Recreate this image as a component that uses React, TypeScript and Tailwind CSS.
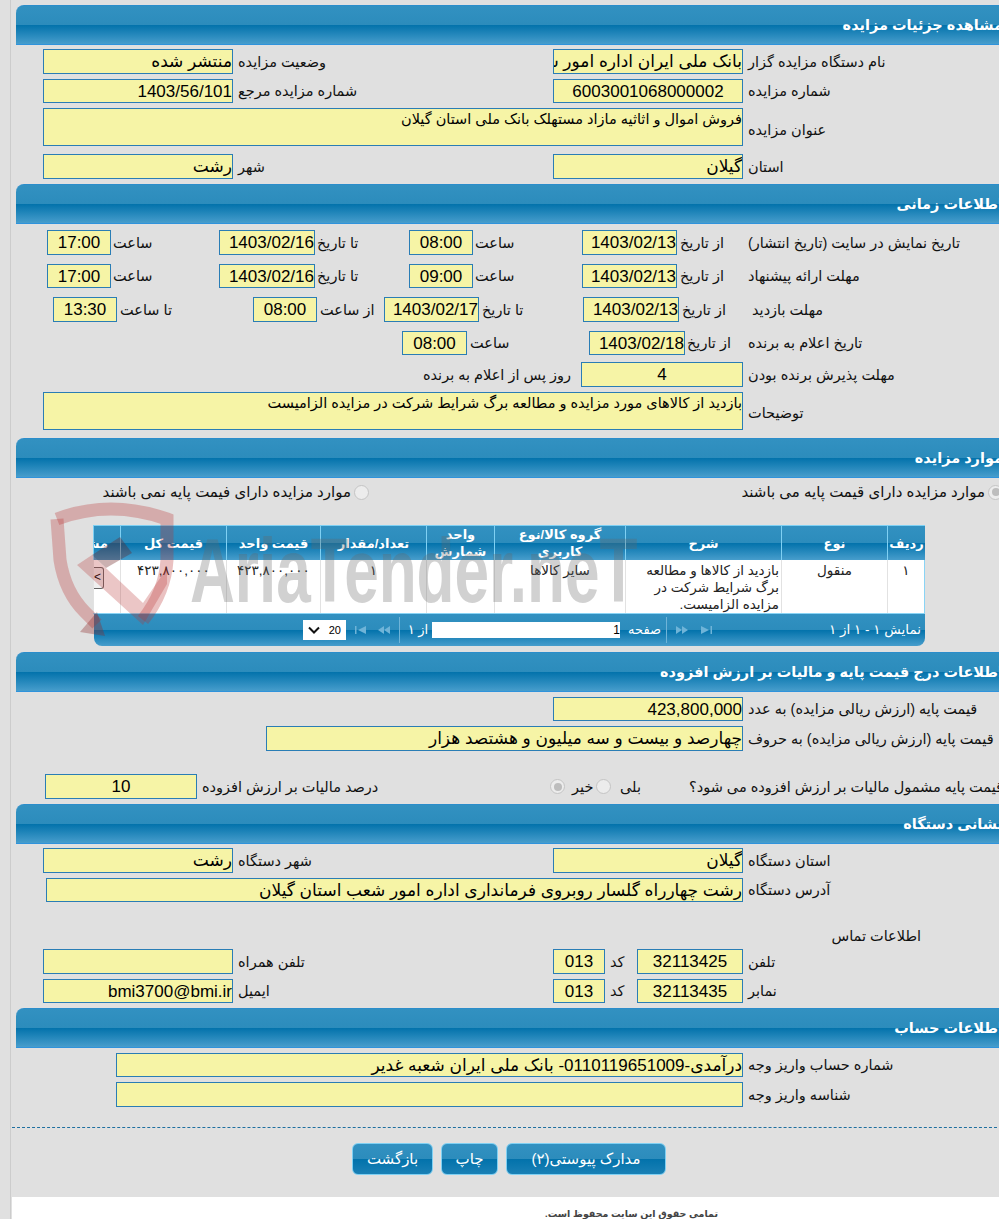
import React from 'react';

const gradient = 'bg-[linear-gradient(#3291c1_0%,#2c8cbc_49%,#0272ab_50%,#479dcc_100%)]';

// yellow read-only field used everywhere in the form
const Box = ({ w, h = 'h-[25px]', center, area, children }: { w: string; h?: string; center?: boolean; area?: boolean; children?: React.ReactNode }) => (
  <div
    dir="rtl"
    className={`${w} ${h} shrink-0 overflow-hidden whitespace-nowrap border border-[#2a7db5] bg-[#f6f4a6] text-black ${
      center ? 'text-center' : 'text-right'
    } ${area ? 'pt-[1px] text-[14.5px] leading-[18px]' : 'text-[17px] leading-[24px]'}`}
  >
    {children}
  </div>
);

const Label = ({ w, cls = 'pl-[2px]', children }: { w?: string; cls?: string; children?: React.ReactNode }) => (
  <div dir="rtl" className={`${w ?? ''} ${cls} shrink-0 whitespace-nowrap text-left text-[14.5px] leading-[18px] text-[#111]`}>
    {children}
  </div>
);

const Row = ({ cls, children }: { cls: string; children: React.ReactNode }) => (
  <div className={`flex items-center ${cls}`}>{children}</div>
);

const SectionHeader = ({ title, cls = '' }: { title: string; cls?: string }) => (
  <div
    dir="rtl"
    className={`${gradient} ${cls} h-[40px] w-[994px] shrink-0 rounded-tl-[8px] border-y border-t-[#2b8dcb] border-b-[#2f93dc] pr-[7px] pt-[9px] text-[14.5px] font-bold leading-[20px] text-white`}
  >
    {title}
  </div>
);

const Radio = ({ checked, cls = '' }: { checked?: boolean; cls?: string }) => (
  <span className={`${cls} flex h-[15px] w-[15px] shrink-0 items-center justify-center rounded-full border border-[#c4c4c4] bg-[#ececec]`}>
    {checked && <span className="h-[8px] w-[8px] rounded-full bg-[#bdbdbd]" />}
  </span>
);

const PagerIcon = ({ d, cls }: { d: string; cls: string }) => (
  <svg viewBox="0 0 14 10" className={`${cls} h-[10px] w-[14px] shrink-0`}>
    <path d={d} fill="#6fb4d8" />
  </svg>
);

const HeadCell = ({ cls = 'justify-center', children }: { cls?: string; children?: React.ReactNode }) => (
  <div dir="rtl" className={`${cls} flex items-center overflow-hidden border-l border-[#7fd0f3] text-center text-[13px] font-bold leading-[17px] text-white`}>
    {children}
  </div>
);

const BodyCell = ({ cls = 'text-center', children }: { cls?: string; children?: React.ReactNode }) => (
  <div dir="rtl" className={`${cls} overflow-hidden border-l border-l-[#e2e2e2] pt-[2px] text-[13.5px] leading-[17px] text-[#222]`}>
    {children}
  </div>
);

const cols = 'grid-cols-[27px_106px_94px_106px_68px_131px_156px_106px_38px]';

const App = () => {
  return (
    <div className="relative h-[1219px] w-[999px] overflow-hidden bg-[#e0e0e0] font-['Liberation_Sans','DejaVu_Sans',sans-serif]">
      <div className="ml-[10px] flex h-full w-[1000px] flex-col border-l border-[#cccccc]">
        <div className="flex flex-col pl-[5px] pt-[5px]">
          <SectionHeader title="مشاهده جزئیات مزایده" />

          <Row cls="mt-[4px] pl-[27px]">
            <Box w="w-[190px]">منتشر شده</Box>
            <Label w="w-[320px]" cls="pl-[5px]">وضعیت مزایده</Label>
            <Box w="w-[190px]">بانک ملی ایران اداره امور شعب</Box>
            <Label cls="pl-[5px]">نام دستگاه مزایده گزار</Label>
          </Row>
          <Row cls="mt-[5px] pl-[27px]">
            <Box w="w-[190px]" h="h-[24px]">1403/56/101</Box>
            <Label w="w-[320px]" cls="pl-[5px]">شماره مزایده مرجع</Label>
            <Box w="w-[190px]" h="h-[24px]" center>6003001068000002</Box>
            <Label cls="pl-[5px]">شماره مزایده</Label>
          </Row>
          <Row cls="mt-[5px] pl-[27px]">
            <Box w="w-[700px]" h="h-[38px]" area>فروش اموال و اثاثیه مازاد مستهلک بانک ملی استان گیلان</Box>
            <Label cls="pl-[5px] pt-[5px]">عنوان مزایده</Label>
          </Row>
          <Row cls="mt-[8px] pl-[27px]">
            <Box w="w-[190px]">رشت</Box>
            <Label w="w-[320px]" cls="pl-[5px]">شهر</Label>
            <Box w="w-[190px]">گیلان</Box>
            <Label cls="pl-[5px]">استان</Label>
          </Row>

          <SectionHeader title="اطلاعات زمانی" cls="mt-[5px]" />

          <Row cls="mt-[6px] pl-[31px]">
            <Box w="w-[64px]" center>17:00</Box>
            <Label w="w-[108px]">ساعت</Label>
            <Box w="w-[96px]">1403/02/16</Box>
            <Label w="w-[94px]">تا تاریخ</Label>
            <Box w="w-[64px]" center>08:00</Box>
            <Label w="w-[109px]">ساعت</Label>
            <Box w="w-[95px]">1403/02/13</Box>
            <Label w="w-[71px]" cls="pl-[3px]">از تاریخ</Label>
            <Label cls="pl-0">تاریخ نمایش در سایت (تاریخ انتشار)</Label>
          </Row>
          <Row cls="mt-[9px] pl-[31px]">
            <Box w="w-[64px]" h="h-[24px]" center>17:00</Box>
            <Label w="w-[108px]">ساعت</Label>
            <Box w="w-[96px]" h="h-[24px]">1403/02/16</Box>
            <Label w="w-[94px]">تا تاریخ</Label>
            <Box w="w-[64px]" h="h-[24px]" center>09:00</Box>
            <Label w="w-[109px]">ساعت</Label>
            <Box w="w-[95px]" h="h-[24px]">1403/02/13</Box>
            <Label w="w-[71px]" cls="pl-[3px]">از تاریخ</Label>
            <Label cls="pl-0">مهلت ارائه پیشنهاد</Label>
          </Row>
          <Row cls="mt-[9px] pl-[37px]">
            <Box w="w-[64px]" center>13:30</Box>
            <Label w="w-[136px]" cls="pl-[3px]">تا ساعت</Label>
            <Box w="w-[64px]" center>08:00</Box>
            <Label w="w-[67px]" cls="pl-[3px]">از ساعت</Label>
            <Box w="w-[95px]">1403/02/17</Box>
            <Label w="w-[104px]" cls="pl-[3px]">تا تاریخ</Label>
            <Box w="w-[96px]">1403/02/13</Box>
            <Label w="w-[73px]" cls="pl-[3px]">از تاریخ</Label>
            <Label cls="pl-0">مهلت بازدید</Label>
          </Row>
          <Row cls="mt-[9px] pl-[386px]">
            <Box w="w-[65px]" h="h-[24px]" center>08:00</Box>
            <Label w="w-[122px]" cls="pl-[3px]">ساعت</Label>
            <Box w="w-[96px]" h="h-[24px]">1403/02/18</Box>
            <Label w="w-[63px]" cls="pl-[2px]">از تاریخ</Label>
            <Label cls="pl-0">تاریخ اعلام به برنده</Label>
          </Row>
          <Row cls="mt-[7px]">
            <div dir="rtl" className="w-[565px] shrink-0 pr-[10px] text-right text-[14.5px] leading-[18px] text-[#111]">روز پس از اعلام به برنده</div>
            <Box w="w-[162px]" center>4</Box>
            <Label cls="pl-[5px]">مهلت پذیرش برنده بودن</Label>
          </Row>
          <Row cls="mt-[5px] pl-[27px]">
            <Box w="w-[700px]" h="h-[38px]" area>بازدید از کالاهای مورد مزایده و مطالعه برگ شرایط شرکت در مزایده الزامیست</Box>
            <Label cls="pl-[5px] pt-[4px]">توضیحات</Label>
          </Row>

          <SectionHeader title="موارد مزایده" cls="mt-[8px]" />

          <Row cls="mt-[5px] h-[18px]">
            <div className="w-[86px] shrink-0" />
            <div dir="rtl" className="w-[249px] shrink-0 whitespace-nowrap text-right text-[15px] leading-[18px] text-[#111]">موارد مزایده دارای فیمت پایه نمی باشند</div>
            <Radio cls="ml-[3px]" />
            <div dir="rtl" className="w-[616px] shrink-0 whitespace-nowrap text-right text-[15px] leading-[18px] text-[#111]">موارد مزایده دارای قیمت پایه می باشند</div>
            <Radio checked cls="ml-[3px]" />
          </Row>

          {/* items table, its last column is cut off at the left */}
          <div className="ml-[77px] mt-[24px] w-[832px] shrink-0 border-t border-[#7fd0f3]">
            <div className={`${gradient} ${cols} grid h-[34px]`}>
              <HeadCell cls="justify-start whitespace-nowrap pr-[12px]">مشخصات</HeadCell>
              <HeadCell>قیمت کل</HeadCell>
              <HeadCell>قیمت واحد</HeadCell>
              <HeadCell>تعداد/مقدار</HeadCell>
              <HeadCell>واحد شمارش</HeadCell>
              <HeadCell>گروه کالا/نوع کاربری</HeadCell>
              <HeadCell>شرح</HeadCell>
              <HeadCell>نوع</HeadCell>
              <HeadCell>ردیف</HeadCell>
            </div>
            <div className={`${cols} grid h-[53px] bg-white`}>
              <BodyCell cls="border-l-[#8ad4f5]">
                <span className="mr-auto mt-[5px] block h-[22px] w-[10px] rounded-r-[3px] border border-l-0 border-[#666] bg-[#efefef] text-left text-[12px] leading-[18px] text-black">&gt;</span>
              </BodyCell>
              <BodyCell>۴۲۳,۸۰۰,۰۰۰</BodyCell>
              <BodyCell>۴۲۳,۸۰۰,۰۰۰</BodyCell>
              <BodyCell>۱</BodyCell>
              <BodyCell />
              <BodyCell>سایر کالاها</BodyCell>
              <BodyCell cls="px-[2px] text-right">بازدید از کالاها و مطالعه برگ شرایط شرکت در مزایده الزامیست.</BodyCell>
              <BodyCell>منقول</BodyCell>
              <BodyCell cls="border-r border-r-[#8ad4f5] text-center">۱</BodyCell>
            </div>
            <div className="h-[1px] bg-[#8ad4f5]" />
            <div className={`${gradient} ml-[1px] flex h-[32px] items-center rounded-b-[8px] text-[13px] leading-[16px] text-white`}>
              <span className="ml-[209px] flex h-[20px] w-[43px] shrink-0 items-center justify-between bg-white px-[5px] text-[11px] text-black">
                <svg viewBox="0 0 12 8" className="h-[8px] w-[12px]"><path d="M1 1.5 6 6.5 11 1.5" fill="none" stroke="#111" strokeWidth="2" /></svg>
                20
              </span>
              <PagerIcon d="M1 1h1.5v8H1zM12 1v8L4 5z" cls="ml-[8px]" />
              <PagerIcon d="M7 1v8L1 5zM13 1v8L7 5z" cls="ml-[9px]" />
              <span className="ml-[8px] h-[26px] w-[1px] shrink-0 bg-[#6fb4d8]" />
              <span dir="rtl" className="ml-[6px] w-[24px] shrink-0 text-center">از ۱</span>
              <span dir="rtl" className="ml-[2px] h-[16px] w-[188px] shrink-0 bg-white text-right text-[12px] leading-[16px] text-black">1</span>
              <span dir="rtl" className="ml-[5px] w-[36px] shrink-0">صفحه</span>
              <span className="ml-[5px] h-[26px] w-[1px] shrink-0 bg-[#6fb4d8]" />
              <PagerIcon d="M1 1v8L7 5zM7 1v8L13 5z" cls="ml-[8px]" />
              <PagerIcon d="M2 1v8L10 5zM11.5 1H13v8h-1.5z" cls="ml-[10px]" />
              <span dir="rtl" className="flex-1 whitespace-nowrap pr-[4px] text-right text-[13.5px]">نمایش ۱ - ۱ از ۱</span>
            </div>
          </div>

          <SectionHeader title="اطلاعات درج قیمت پایه و مالیات بر ارزش افزوده" cls="mt-[6px]" />

          <Row cls="mt-[5px] pl-[537px]">
            <Box w="w-[190px]" h="h-[24px]">423,800,000</Box>
            <Label cls="pl-[5px]">قیمت پایه (ارزش ریالی مزایده) به عدد</Label>
          </Row>
          <Row cls="mt-[5px] pl-[250px]">
            <Box w="w-[477px]">چهارصد و بیست و سه میلیون و هشتصد هزار</Box>
            <Label cls="pl-[5px]">قیمت پایه (ارزش ریالی مزایده) به حروف</Label>
          </Row>
          <Row cls="mt-[23px] pl-[29px]">
            <Box w="w-[152px]" center>10</Box>
            <Label w="w-[353px]" cls="pl-[5px]">درصد مالیات بر ارزش افزوده</Label>
            <Radio checked />
            <Label w="w-[31px]" cls="pl-[7px]">خیر</Label>
            <Radio />
            <Label w="w-[76px]" cls="pl-[9px]">بلی</Label>
            <Label>قیمت پایه مشمول مالیات بر ارزش افزوده می شود؟</Label>
          </Row>

          <SectionHeader title="نشانی دستگاه" cls="mt-[5px]" />

          <Row cls="mt-[4px] pl-[27px]">
            <Box w="w-[190px]">رشت</Box>
            <Label w="w-[320px]" cls="pl-[5px]">شهر دستگاه</Label>
            <Box w="w-[190px]">گیلان</Box>
            <Label cls="pl-[5px]">استان دستگاه</Label>
          </Row>
          <Row cls="mt-[5px] pl-[30px]">
            <Box w="w-[697px]" h="h-[24px]">رشت چهارراه گلسار روبروی فرمانداری اداره امور شعب استان گیلان</Box>
            <Label cls="pl-[5px]">آدرس دستگاه</Label>
          </Row>
          <div dir="rtl" className="ml-[814px] mt-[25px] h-[22px] w-[91px] shrink-0 whitespace-nowrap text-[14.5px] leading-[18px] text-[#111]">اطلاعات تماس</div>
          <Row cls="pl-[27px]">
            <Box w="w-[190px]"></Box>
            <Label w="w-[320px]" cls="pl-[5px]">تلفن همراه</Label>
            <Box w="w-[52px]" center>013</Box>
            <Label w="w-[32px]" cls="pl-[5px]">کد</Label>
            <Box w="w-[106px]" center>32113425</Box>
            <Label cls="pl-[5px]">تلفن</Label>
          </Row>
          <Row cls="mt-[5px] pl-[27px]">
            <Box w="w-[190px]" h="h-[24px]">bmi3700@bmi.ir</Box>
            <Label w="w-[320px]" cls="pl-[5px]">ایمیل</Label>
            <Box w="w-[52px]" h="h-[24px]" center>013</Box>
            <Label w="w-[32px]" cls="pl-[5px]">کد</Label>
            <Box w="w-[106px]" h="h-[24px]" center>32113435</Box>
            <Label cls="pl-[5px]">نمابر</Label>
          </Row>

          <SectionHeader title="اطلاعات حساب" cls="mt-[5px]" />

          <Row cls="mt-[5px] pl-[100px]">
            <Box w="w-[627px]" h="h-[24px]">درآمدی-0110119651009- بانک ملی ایران شعبه غدیر</Box>
            <Label cls="pl-[5px]">شماره حساب واریز وجه</Label>
          </Row>
          <Row cls="mt-[5px] pl-[100px]">
            <Box w="w-[627px]"></Box>
            <Label cls="pl-[5px]">شناسه واریز وجه</Label>
          </Row>
        </div>

        <div className="ml-[1px] mt-[20px] h-0 w-[990px] shrink-0 border-t border-dashed border-[#1f6f9f]" />

        <div dir="rtl" className="ml-[341px] mt-[15px] flex w-[314px] shrink-0 flex-row-reverse gap-[8px] text-[15px] text-white">
          <button className="h-[32px] w-[81px] rounded-[6px] border border-[#7fd0f3] bg-[linear-gradient(#3291c1_0%,#2c8cbc_50%,#0272ab_50%,#1a80b5_100%)]">بازگشت</button>
          <button className="h-[32px] w-[57px] rounded-[6px] border border-[#7fd0f3] bg-[linear-gradient(#3291c1_0%,#2c8cbc_50%,#0272ab_50%,#1a80b5_100%)]">چاپ</button>
          <button className="h-[32px] w-[160px] rounded-[6px] border border-[#7fd0f3] bg-[linear-gradient(#3291c1_0%,#2c8cbc_50%,#0272ab_50%,#1a80b5_100%)]">مدارک پیوستی(۲)</button>
        </div>

        <div className="ml-[1px] mt-[22px] flex-1 bg-white pl-[556px] pt-[10px]">
          <div dir="rtl" className="w-[150px] whitespace-nowrap text-[9.5px] font-bold leading-[14px] text-[#444]">تمامی حقوق این سایت محفوظ است.</div>
        </div>
      </div>

      {/* site watermark lying over the table */}
      <div className="pointer-events-none absolute left-[50px] top-[500px] h-[142px] w-[620px]">
        <svg viewBox="0 0 130 142" className="absolute left-0 top-0 h-[142px] w-[130px]">
          <g fill="none" stroke="#b83232" strokeOpacity="0.3" strokeWidth="13">
            <path d="M7 19Q60 -1 117 19L117 60Q115 92 93 120" />
            <path d="M7 19L10 60Q15 92 35 112L47 124" />
          </g>
          <path d="M30 132 55 136 47 112Z" fill="#8c2b2b" fillOpacity="0.35" />
          <path d="M27 65 42 55 93 103 117 68 117 84 93 125Z" fill="#b83232" fillOpacity="0.28" />
          <path d="M42 55 70 37 82 53 56 68Z" fill="#6a2020" fillOpacity="0.35" />
        </svg>
        <div dir="ltr" className="absolute left-[140px] top-[26px] origin-left scale-x-[0.69] whitespace-nowrap text-[90px] font-bold leading-[90px] text-[#666666]/30">
          AriaTender.neT
        </div>
      </div>
    </div>
  );
};

export default App;
